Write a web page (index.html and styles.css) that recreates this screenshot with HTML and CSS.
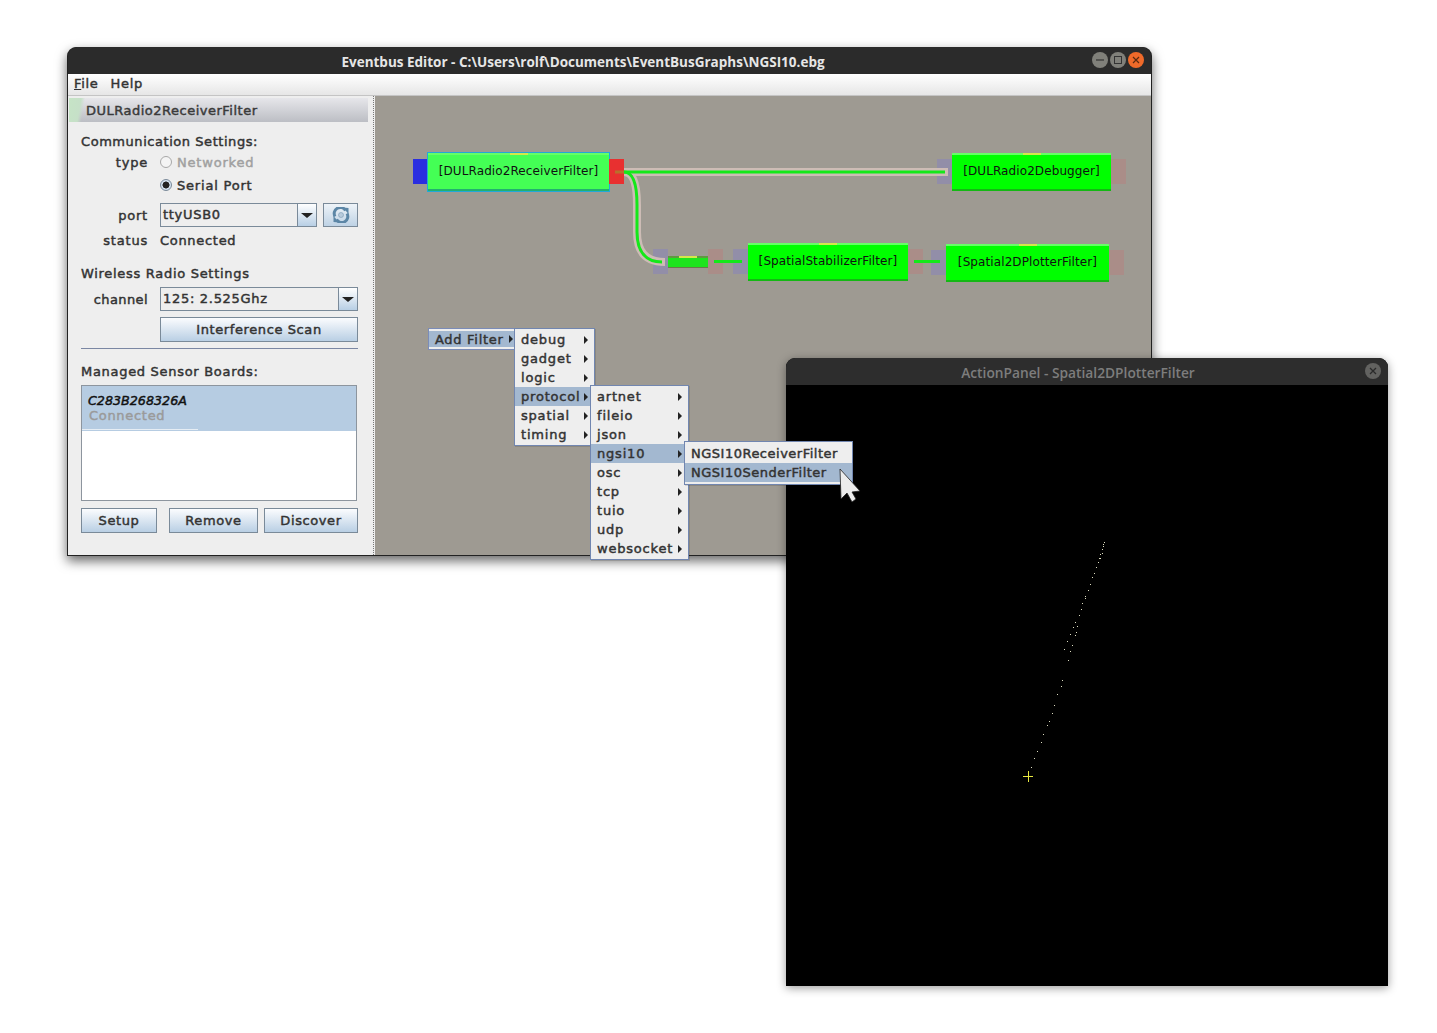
FILE: index.html
```html
<!DOCTYPE html>
<html lang="en">
<head>
    <meta charset="UTF-8">
    <meta name="viewport" content="width=device-width, initial-scale=1.0">
    <title>Eventbus Editor</title>
    <link rel="stylesheet" href="styles.css">
</head>
<body>
<div class="desktop">

    <!-- editor window -->
    <div class="window editor">
        <div class="titlebar">
            <span class="title">Eventbus Editor - C:\Users\rolf\Documents\EventBusGraphs\NGSI10.ebg</span>
            <div class="wm-buttons">
                <span class="wm-btn"><svg width="16" height="16" viewBox="0 0 16 16"><path d="M4 8h8" stroke="#333" stroke-width="1.2"/></svg></span>
                <span class="wm-btn"><svg width="16" height="16" viewBox="0 0 16 16"><rect x="4.5" y="4.5" width="7" height="7" fill="none" stroke="#333" stroke-width="1"/></svg></span>
                <span class="wm-btn close"><svg width="16" height="16" viewBox="0 0 16 16"><path d="M5 5l6 6M11 5l-6 6" stroke="#5a2a10" stroke-width="1.2"/></svg></span>
            </div>
        </div>
        <div class="menubar">
            <span class="menubar-item"><u>F</u>ile</span>
            <span class="menubar-item">Help</span>
        </div>
        <div class="editor-body">
            <div class="side">
                <div class="side-head">DULRadio2ReceiverFilter</div>
                <div class="side-form">
                    <div class="section first">Communication Settings:</div>
                    <div class="row r-type">
                        <label class="lbl">type</label>
                        <span class="radio-line disabled"><span class="radio"></span>Networked</span>
                    </div>
                    <div class="row r-serial">
                        <label class="lbl"></label>
                        <span class="radio-line"><span class="radio on"></span>Serial Port</span>
                    </div>
                    <div class="row r-port">
                        <label class="lbl">port</label>
                        <div class="combo port-combo">
                            <span class="combo-val">ttyUSB0</span>
                            <span class="combo-arrow"></span>
                        </div>
                        <button class="btn refresh">
                            <svg width="18" height="16" viewBox="0 0 18 16">
                                <path d="M3 9.500A6 6 0 0 1 13.500 3.500" fill="none" stroke="#5c86a6" stroke-width="3"/>
                                <path d="M15 6.500A6 6 0 0 1 4.500 12.500" fill="none" stroke="#5c86a6" stroke-width="3"/>
                                <path d="M11 .5L16.500 1V7ZM7 15.500L1.500 15V9Z" fill="#5c86a6"/>
                                <circle cx="9" cy="8" r="2.500" fill="#b8cbdc" stroke="#7a9ab4" stroke-width=".6"/>
                            </svg>
                        </button>
                    </div>
                    <div class="row r-status">
                        <label class="lbl">status</label>
                        <span class="value">Connected</span>
                    </div>
                    <div class="section wireless">Wireless Radio Settings</div>
                    <div class="row r-channel">
                        <label class="lbl channel">channel</label>
                        <div class="combo channel-combo">
                            <span class="combo-val">125: 2.525Ghz</span>
                            <span class="combo-arrow"></span>
                        </div>
                    </div>
                    <div class="row r-scan">
                        <label class="lbl"></label>
                        <button class="btn scan">Interference Scan</button>
                    </div>
                    <div class="rule"></div>
                    <div class="section managed">Managed Sensor Boards:</div>
                    <div class="board-list">
                        <div class="board selected">
                            <div class="board-id">C283B268326A</div>
                            <div class="board-state">Connected</div>
                            <div class="board-line"></div>
                        </div>
                    </div>
                    <div class="board-btns">
                        <button class="btn setup">Setup</button>
                        <button class="btn remove">Remove</button>
                        <button class="btn discover">Discover</button>
                    </div>
                </div>
            </div>
            <div class="splitter"></div>
            <div class="canvas">
                <span class="port in active" style="left:38px;top:63px"></span>
                <div class="node selected" style="left:53px;top:57px;width:181px;height:38px">[DULRadio2ReceiverFilter]</div>
                <span class="port out active" style="left:234px;top:63px"></span>

                <span class="port in" style="left:562px;top:63px"></span>
                <div class="node" style="left:577px;top:57px;width:159px;height:38px">[DULRadio2Debugger]</div>
                <span class="port out" style="left:736px;top:63px"></span>

                <span class="port in" style="left:278px;top:153px"></span>
                <div class="node mini" style="left:293px;top:160px;width:40px;height:11px"></div>
                <span class="port out" style="left:333px;top:153px"></span>

                <span class="port in" style="left:358px;top:153px"></span>
                <div class="node" style="left:373px;top:147px;width:160px;height:38px">[SpatialStabilizerFilter]</div>
                <span class="port out" style="left:533px;top:153px"></span>

                <span class="port in" style="left:556px;top:154px"></span>
                <div class="node" style="left:571px;top:148px;width:163px;height:38px">[Spatial2DPlotterFilter]</div>
                <span class="port out" style="left:734px;top:154px"></span>

                <svg class="wires" width="776" height="460" viewBox="375 96 776 460">
                    <path d="M624 172H948" class="wire-bg"/>
                    <path d="M624 172C634 172 637 186 637 205V232C637 252 646 262 665 262" class="wire-bg"/>
                    <path d="M615 172H624" class="wire-stub"/>
                    <path d="M624 172H945" class="wire-fg"/>
                    <path d="M624 172C634 172 637 186 637 205V232C637 252 646 262 662 262" class="wire-fg"/>
                    <path d="M714 261.500H742M914 261.500H940" class="wire-fg"/>
                </svg>

                <div class="add-filter"><span class="add-filter-bar">Add Filter<i class="arr"></i></span></div>
            </div>
        </div>
    </div>

    <!-- plot window -->
    <div class="window plot">
        <div class="titlebar dim">
            <span class="title">ActionPanel - Spatial2DPlotterFilter</span>
            <div class="wm-buttons">
                <span class="wm-btn faded"><svg width="16" height="16" viewBox="0 0 16 16"><path d="M5 5l6 6M11 5l-6 6" stroke="#2a2a2a" stroke-width="1.3"/></svg></span>
            </div>
        </div>
        <div class="plot-area">
            <svg width="602" height="601" viewBox="0 0 602 601">
                <path class="dots" d="M318 157h1M317 159h1M317 161h1M316 164h1M314 169h1M316 168h1M313 173h1M314 173h1M312 177h1M310 182h1M308 188h1M306 192h1M304 199h1M302 205h1M299 211h1M299 213h1M296 218h1M295 224h1M293 230h1M289 237h1M287 242h1M291 241h1M290 247h1M289 250h1M284 249h1M281 256h1M286 260h1M278 264h1M284 266h1M282 275h1M276 295h1M275 301h1M271 309h1M268 320h1M266 328h1M263 336h1M261 340h1M257 349h1M255 357h1M251 366h1M248 373h1M245 382h1"/>
                <path class="cross" d="M237 391.500h10M242.500 386v11"/>
            </svg>
        </div>
    </div>

    <!-- open popup menus, over both windows -->
    <div class="menu m1">
        <div class="item">debug<i class="arr"></i></div>
        <div class="item">gadget<i class="arr"></i></div>
        <div class="item">logic<i class="arr"></i></div>
        <div class="item hot">protocol<i class="arr"></i></div>
        <div class="item">spatial<i class="arr"></i></div>
        <div class="item">timing<i class="arr"></i></div>
    </div>
    <div class="menu m2">
        <div class="item">artnet<i class="arr"></i></div>
        <div class="item">fileio<i class="arr"></i></div>
        <div class="item">json<i class="arr"></i></div>
        <div class="item hot">ngsi10<i class="arr"></i></div>
        <div class="item">osc<i class="arr"></i></div>
        <div class="item">tcp<i class="arr"></i></div>
        <div class="item">tuio<i class="arr"></i></div>
        <div class="item">udp<i class="arr"></i></div>
        <div class="item">websocket<i class="arr"></i></div>
    </div>
    <div class="menu m3">
        <div class="item">NGSI10ReceiverFilter</div>
        <div class="item hot">NGSI10SenderFilter</div>
    </div>

    <svg class="cursor" width="24" height="38" viewBox="0 0 24 38">
        <path d="M2 2L3 32L9 26L14 35L18 32L14 25L22 24Z" fill="#ececec" stroke="#222" stroke-width=".8"/>
    </svg>
</div>
</body>
</html>
```

FILE: styles.css
```css
* {
    box-sizing: border-box;
}
body {
    margin: 0;
    background: #fff;
    font-family: "DejaVu Sans", sans-serif;
    font-size: 13px;
    letter-spacing: 0.7px;
    -webkit-text-stroke: 0.45px;
    color: #333;
}
.desktop {
    position: relative;
    width: 1437px;
    height: 1033px;
    overflow: hidden;
}

/* windows */
.window {
    position: absolute;
    border-radius: 9px 9px 0 0;
    background: #222;
    box-shadow: 0 5px 12px rgba(0, 0, 0, 0.6);
}
.editor {
    left: 67px;
    top: 47px;
    width: 1085px;
    height: 509px;
    padding: 0 1px 1px;
    display: flex;
    flex-direction: column;
}
.plot {
    left: 786px;
    top: 358px;
    width: 602px;
    height: 628px;
    background: #000;
    box-shadow: 0 2px 10px rgba(0, 0, 0, 0.4);
}
.titlebar {
    position: relative;
    height: 27px;
    flex: none;
    display: flex;
    align-items: center;
    justify-content: center;
    background: #2b2b2b;
    border-radius: 9px 9px 0 0;
}
.title {
    font-family: "Open Sans", sans-serif;
    font-size: 13.5px;
    font-weight: bold;
    letter-spacing: 0;
    -webkit-text-stroke: 0;
    color: #e6e6e6;
    margin: 2px 53px 0 0;
}
.dim {
    background: #2d2d2d;
}
.dim .title {
    font-size: 13.75px;
    color: #7d7d7d;
    font-weight: 600;
    margin-right: 18px;
}
.wm-buttons {
    position: absolute;
    right: 7px;
    top: 5px;
    display: flex;
    gap: 2px;
}
.wm-btn {
    width: 16px;
    height: 16px;
    border-radius: 50%;
    background: #80807a;
    display: block;
}
.wm-btn svg {
    display: block;
}
.wm-btn.close {
    background: #ef6a2a;
}
.wm-btn.faded {
    background: #626260;
}
.menubar {
    height: 22px;
    flex: none;
    display: flex;
    align-items: center;
    gap: 12px;
    padding: 0 6px 2px;
    background: linear-gradient(#fff, #e6e6e6);
    border-bottom: 1px solid #c4c4c4;
}
.editor-body {
    flex: 1;
    display: flex;
    min-height: 0;
    background: #eee;
}

/* left panel */
.side {
    width: 305px;
    flex: none;
    padding: 2px 0 0 1px;
}
.side-head {
    width: 299px;
    height: 24px;
    line-height: 25px;
    padding-left: 17px;
    letter-spacing: 0.5px;
    color: #3a3a3a;
    background: linear-gradient(100deg, #c6e4c6 0, #c6e0c8 12px, transparent 16px), linear-gradient(#e6e6ea, #bcbec4);
}
.side-form {
    padding: 0 0 0 12px;
    width: 290px;
}
.section {
    height: 16px;
    line-height: 16px;
}
.section.first {
    margin-top: 12px;
    letter-spacing: 0.55px;
}
.section.wireless {
    margin-top: 18px;
}
.section.managed {
    margin-top: 15px;
}
.row {
    display: flex;
    align-items: center;
}
.lbl {
    width: 67px;
    margin-right: 12px;
    text-align: right;
    letter-spacing: 0.8px;
    flex: none;
}
.lbl.channel {
    letter-spacing: 0.4px;
}
.r-type {
    height: 18px;
    margin-top: 3px;
}
.r-serial {
    height: 18px;
    margin-top: 5px;
}
.r-port {
    height: 24px;
    margin-top: 9px;
}
.r-status {
    height: 16px;
    margin-top: 5px;
}
.r-channel {
    height: 24px;
    margin-top: 5px;
}
.r-scan {
    height: 25px;
    margin-top: 6px;
}
.radio-line {
    display: flex;
    align-items: center;
    gap: 5px;
    letter-spacing: 0.8px;
}
.radio-line.disabled {
    color: #a0a0a0;
}
.radio {
    width: 12px;
    height: 12px;
    border-radius: 50%;
    border: 1px solid #a8a8a8;
    background: #f4f4f4;
}
.radio.on {
    border-color: #7a8a9a;
    background: radial-gradient(circle, #222 0, #222 3.2px, #d4e2f0 3.8px);
}
.combo {
    height: 100%;
    display: flex;
    align-items: stretch;
    border: 1px solid #7a8a99;
    background: #eee;
}
.port-combo {
    width: 157px;
}
.channel-combo {
    width: 198px;
}
.combo-val {
    flex: 1;
    padding-left: 2px;
    line-height: 22px;
}
.combo-arrow {
    width: 19px;
    position: relative;
    border-left: 1px solid #7a8a99;
    background: linear-gradient(#fff, #b8cfe5);
}
.combo-arrow::after {
    content: "";
    position: absolute;
    left: 3px;
    top: 9px;
    border: 6px solid transparent;
    border-top: 5px solid #222;
    border-bottom: 0;
}
.btn {
    font: inherit;
    color: inherit;
    letter-spacing: 0.6px;
    padding: 0;
    height: 25px;
    border: 1px solid #7a8a99;
    background: linear-gradient(#fbfcfe, #b9cfe4);
}
.refresh {
    width: 35px;
    height: 24px;
    margin-left: 6px;
    display: flex;
    align-items: center;
    justify-content: center;
    background: linear-gradient(#eef3f8, #bed2e5);
}
.scan {
    width: 198px;
}
.rule {
    height: 1px;
    width: 277px;
    margin-top: 6px;
    background: #7b87a3;
}
.board-list {
    width: 276px;
    height: 116px;
    margin-top: 5px;
    background: #fff;
    border: 1px solid #8d959e;
}
.board.selected {
    height: 45px;
    padding: 7px 0 0 6px;
    background: #b6cce2;
    position: relative;
}
.board-id {
    font-style: italic;
    font-size: 12.7px;
    letter-spacing: 0;
    line-height: 15px;
    color: #111;
}
.board-state {
    line-height: 15px;
    padding-left: 1px;
    color: #9a9a9a;
}
.board-line {
    position: absolute;
    left: 0;
    bottom: 1px;
    width: 116px;
    height: 1px;
    background: #e6edf4;
}
.board-btns {
    display: flex;
    margin-top: 7px;
}
.setup {
    width: 76px;
}
.remove {
    width: 89px;
    margin-left: 12px;
}
.discover {
    width: 94px;
    margin-left: 6px;
}
.splitter {
    width: 2px;
    flex: none;
    border-left: 1px dotted #777;
}

/* canvas */
.canvas {
    position: relative;
    flex: 1;
    background: #9e9a92;
    overflow: hidden;
}
.wires {
    position: absolute;
    left: 0;
    top: 0;
}
.wires path {
    fill: none;
}
.wire-bg {
    stroke: #cdbcb5;
    stroke-width: 8;
}
.wire-fg {
    stroke: #14e81a;
    stroke-width: 3;
}
.wire-stub {
    stroke: #b8702c;
    stroke-width: 3;
}
.node {
    position: absolute;
    display: flex;
    align-items: center;
    justify-content: center;
    padding-bottom: 2px;
    font-size: 12px;
    letter-spacing: 0.1px;
    -webkit-text-stroke: 0;
    color: #111;
    background: #00ff00;
    border-top: 2px solid #66ff66;
    border-bottom: 2px solid #14b814;
}
.node::before {
    content: "";
    position: absolute;
    left: calc(50% - 9px);
    top: -2px;
    width: 18px;
    height: 2px;
    background: #d4e84a;
}
.node.selected {
    background: #44ff55;
    box-shadow: 0 0 0 1px #22a8d8;
    border-bottom-color: #22b070;
}
.node.mini {
    background: #1ee41e;
    border-top-color: #5e9a40;
    border-bottom: 0;
    box-shadow: 0 1px 0 #6a7a4a;
}
.port {
    position: absolute;
    width: 15px;
    height: 25px;
}
.port.in {
    background: #928ea8;
}
.port.out {
    background: #aa8d88;
}
.port.in.active {
    background: #2a2ee0;
}
.port.out.active {
    background: #e83030;
}
.add-filter {
    position: absolute;
    left: 53px;
    top: 232px;
    width: 86px;
    height: 22px;
    padding: 2px 0;
    background: #eee;
    border-top: 1px solid #7b8cb8;
    border-bottom: 1px solid #7b8cb8;
    border-left: 1px solid #7b8cb8;
}
.add-filter-bar {
    display: flex;
    align-items: center;
    height: 16px;
    padding-left: 6px;
    background: #a3b8d0;
    position: relative;
}

/* popup menus */
.menu {
    position: absolute;
    padding: 1px 0;
    background: #eee;
    border: 1px solid #7186b0;
    box-shadow: 1px 1px 0 rgba(0, 0, 0, 0.12);
    letter-spacing: 0.8px;
}
.m1 {
    left: 514px;
    top: 328px;
    width: 81px;
}
.m2 {
    left: 590px;
    top: 385px;
    width: 99px;
}
.m3 {
    left: 684px;
    top: 441px;
    width: 169px;
    padding: 2px 0;
    letter-spacing: 0.5px;
}
.item {
    position: relative;
    height: 19px;
    line-height: 19px;
    padding-left: 6px;
}
.item.hot {
    background: #a3b8d0;
}
.arr {
    position: absolute;
    right: 6px;
    top: 6px;
    border: 4px solid transparent;
    border-left: 4px solid #222;
    border-right: 0;
}
.add-filter-bar .arr {
    top: 4px;
    right: 1px;
}
.cursor {
    position: absolute;
    left: 838px;
    top: 467px;
}

/* plot */
.plot-area {
    height: 601px;
    background: #000;
}
.plot-area svg {
    display: block;
}
.dots {
    stroke: #dcdcc0;
    stroke-width: 1;
    fill: none;
    shape-rendering: crispEdges;
}
.cross {
    stroke: #e8e840;
    stroke-width: 1;
    fill: none;
    shape-rendering: crispEdges;
}
```
